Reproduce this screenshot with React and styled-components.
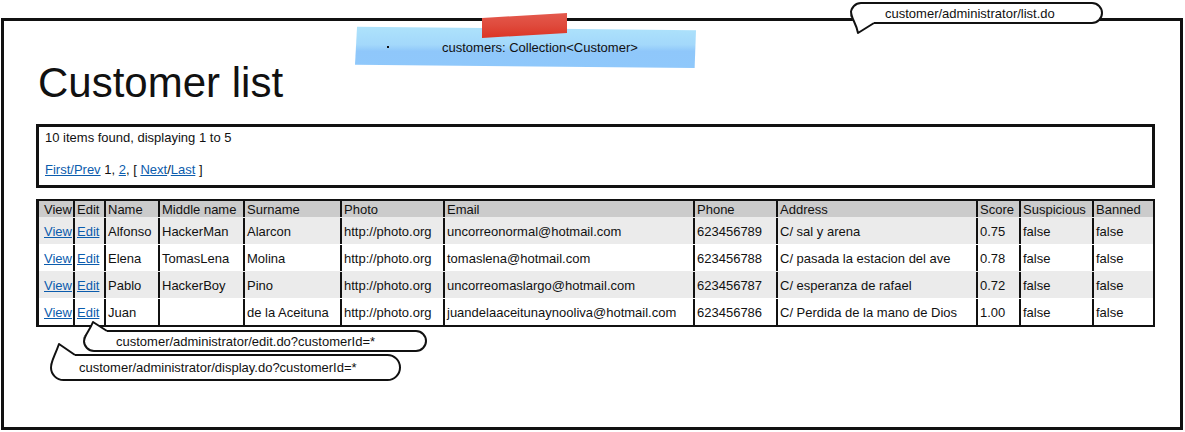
import React from "react";
import styled, { createGlobalStyle } from "styled-components";

const GlobalStyle = createGlobalStyle`
  body {
    margin: 0;
    background: #fff;
    font-family: "Liberation Sans", Arial, sans-serif;
    color: #111;
  }
`;

const Page = styled.div`
  position: relative;
  width: 1185px;
  height: 432px;
  overflow: hidden;
`;

const Frame = styled.div`
  box-sizing: border-box;
  width: 1182px;
  height: 412px;
  margin: 18px 0 0 1px;
  border: 3px solid #111;
  padding: 38px 25px 0 32px;
  display: flex;
  flex-direction: column;
`;

const Title = styled.h1`
  margin: 0 0 0 2px;
  font-size: 42px;
  line-height: 48px;
  font-weight: 400;
`;

const InfoBox = styled.div`
  margin-top: 17px;
  border: 3px solid #111;
  padding: 3px 6px 7px;
  display: flex;
  flex-direction: column;
  gap: 16px;
  font-size: 13px;
  line-height: 16px;
`;

const Link = styled.a`
  color: #0b5cad;
  text-decoration: underline;
`;

const Table = styled.div`
  margin-top: 11px;
  border: 2px solid #111;
  border-left-width: 3px;
  font-size: 13px;
`;

const Row = styled.div`
  display: grid;
  grid-template-columns: 36px 31px 54px 85px 97px 103px 250px 83px 200px 43px 73px 59px;
  height: ${(p) => (p.$head ? 16 : 27)}px;
  padding-top: ${(p) => (p.$head ? 0 : 1)}px;
  box-sizing: border-box;
  background: ${(p) => (p.$head ? "#cbcbcb" : p.$shade ? "#ebebeb" : "#fff")};
`;

const Cell = styled.div`
  box-sizing: border-box;
  border-right: 2px solid #111;
  padding-left: ${(p) => (p.$first ? 5 : 2)}px;
  display: flex;
  align-items: center;
  white-space: nowrap;
  overflow: hidden;
  &:last-child {
    border-right: none;
  }
`;

const Note = styled.div`
  position: absolute;
  left: 355px;
  top: 26px;
  width: 341px;
  height: 42px;
  box-sizing: border-box;
  padding-left: 32px;
  display: flex;
  align-items: center;
  font-size: 13px;
  background: linear-gradient(180deg, #aee3fb 0%, #a3d8fb 45%, #8fc7fa 60%, #8fc8fb 100%);
  clip-path: polygon(0.6% 2%, 100% 10%, 99.6% 100%, 0 92%);
`;

const Dot = styled.span`
  width: 2px;
  height: 2px;
  background: #111;
  margin-right: 53px;
`;

const Tape = styled.div`
  position: absolute;
  left: 482px;
  top: 13px;
  width: 85px;
  height: 25px;
  background: linear-gradient(180deg, #e4594d 0%, #df4a3c 50%, #dc3424 100%);
  clip-path: polygon(0 20%, 100% 0, 100% 80%, 0 100%);
`;

const Callout = styled.div`
  position: absolute;
  left: ${(p) => p.$x}px;
  top: ${(p) => p.$y}px;
  width: ${(p) => p.$w}px;
  height: ${(p) => p.$h}px;
  box-sizing: border-box;
  border: 2px solid #111;
  border-radius: ${(p) => p.$h / 2}px;
  background: #fff;
  padding-left: ${(p) => p.$pad}px;
  display: flex;
  align-items: center;
  font-size: 13px;
  white-space: nowrap;
`;

const Tail = styled.svg`
  position: absolute;
  left: -2px;
  top: -2px;
  width: 30px;
  height: 30px;
  overflow: visible;
`;

function Bubble({ x, y, w, h, pad, fill, stroke, children }) {
  return (
    <Callout $x={x} $y={y} $w={w} $h={h} $pad={pad}>
      <Tail viewBox="0 0 30 30">
        <path d={fill} fill="#fff" />
        <path d={stroke} fill="none" stroke="#111" strokeWidth="2" strokeLinejoin="round" />
      </Tail>
      {children}
    </Callout>
  );
}

const headers = ["View", "Edit", "Name", "Middle name", "Surname", "Photo", "Email", "Phone", "Address", "Score", "Suspicious", "Banned"];

const customers = [
  ["Alfonso", "HackerMan", "Alarcon", "uncorreonormal@hotmail.com", "623456789", "C/ sal y arena", "0.75"],
  ["Elena", "TomasLena", "Molina", "tomaslena@hotmail.com", "623456788", "C/ pasada la estacion del ave", "0.78"],
  ["Pablo", "HackerBoy", "Pino", "uncorreomaslargo@hotmail.com", "623456787", "C/ esperanza de rafael", "0.72"],
  ["Juan", "", "de la Aceituna", "juandelaaceitunaynooliva@hotmail.com", "623456786", "C/ Perdida de la mano de Dios", "1.00"],
];

export default function App() {
  return (
    <>
      <GlobalStyle />
      <Page>
        <Frame>
          <Title>Customer list</Title>
          <InfoBox>
            <div>10 items found, displaying 1 to 5</div>
            <div>
              <Link href="#">First/Prev</Link> 1, <Link href="#">2</Link>, [ <Link href="#">Next</Link>/<Link href="#">Last</Link> ]
            </div>
          </InfoBox>
          <Table>
            <Row $head>
              {headers.map((h, i) => (
                <Cell key={h} $first={i === 0}>{h}</Cell>
              ))}
            </Row>
            {customers.map((c, i) => (
              <Row key={c[0]} $shade={i % 2 === 0}>
                <Cell $first><Link href="#">View</Link></Cell>
                <Cell><Link href="#">Edit</Link></Cell>
                <Cell>{c[0]}</Cell>
                <Cell>{c[1]}</Cell>
                <Cell>{c[2]}</Cell>
                <Cell>http://photo.org</Cell>
                <Cell>{c[3]}</Cell>
                <Cell>{c[4]}</Cell>
                <Cell>{c[5]}</Cell>
                <Cell>{c[6]}</Cell>
                <Cell>false</Cell>
                <Cell>false</Cell>
              </Row>
            ))}
          </Table>
        </Frame>

        <Note>
          <Dot />
          customers: Collection&lt;Customer&gt;
        </Note>
        <Tape />

        <Bubble
          x={850} y={2} w={253} h={22} pad={33}
          fill="M0 9 C 0 17, 6 20, 8 31 L 24 21 L 24 9 Z"
          stroke="M1 9 C 1 17, 6 20, 8 31 L 24 21"
        >
          customer/administrator/list.do
        </Bubble>
        <Bubble
          x={83} y={330} w={344} h={22} pad={31}
          fill="M0 12 C 0 5, 6 2, 10 -8 L 24 1 L 24 12 Z"
          stroke="M1 12 C 1 5, 6 2, 10 -8 L 24 1"
        >
          customer/administrator/edit.do?customerId=*
        </Bubble>
        <Bubble
          x={50} y={354} w={351} h={27} pad={27}
          fill="M0 14 C 0 7, 4 4, 9 -10 L 25 1 L 25 14 Z"
          stroke="M1 14 C 1 7, 4 4, 9 -10 L 25 1"
        >
          customer/administrator/display.do?customerId=*
        </Bubble>
      </Page>
    </>
  );
}
